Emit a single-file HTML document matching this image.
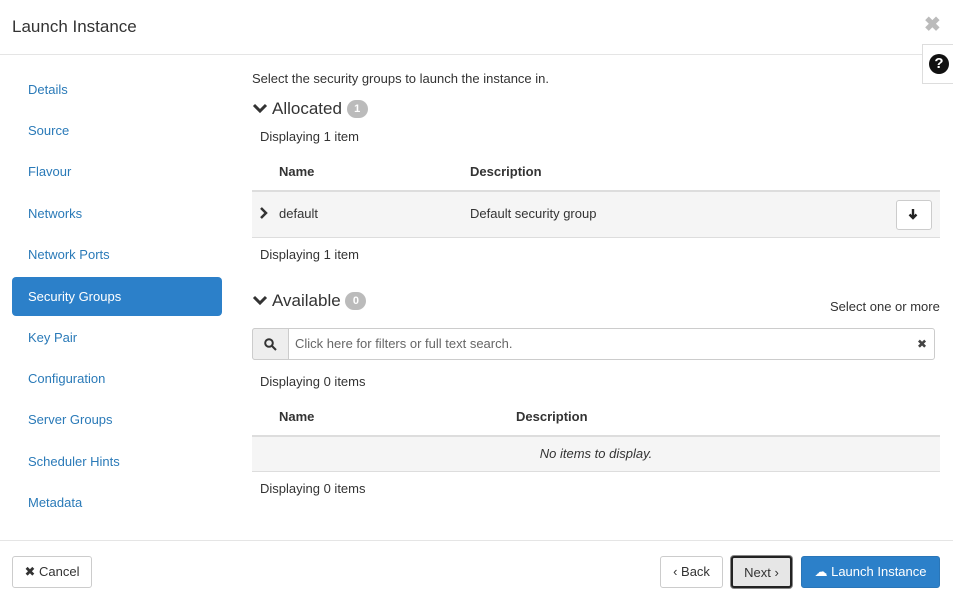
<!DOCTYPE html>
<html><head><style>
*{box-sizing:border-box;margin:0;padding:0}
body{width:953px;height:603px;background:#fff;font-family:"Liberation Sans",sans-serif;font-size:13px;color:#333;position:relative;overflow:hidden}
.a{position:absolute}
.hdr{left:0;top:0;width:953px;height:55px;border-bottom:1px solid #e5e5e5}
.nav a{position:absolute;left:12px;width:210px;height:39px;line-height:39px;padding-left:16px;color:#2a7ab8;text-decoration:none;border-radius:4px}
.nav a.act{background:#2c80c9;color:#fff}
.th{font-weight:bold}
.btn{position:absolute;border:1px solid #ccc;border-radius:3px;background:#fff;height:32px;line-height:30px;text-align:center;font-size:13px;color:#333}
.badge{display:inline-block;background:#bbb;color:#fff;border-radius:10px;font-size:11px;font-weight:bold;width:21px;height:18px;line-height:18px;text-align:center;vertical-align:2px}
</style></head><body>
<div class="a hdr"></div>
<div class="a" style="left:12px;top:17px;font-size:17px;color:#333">Launch Instance</div>
<div class="a" style="left:924px;top:12px;font-size:20px;color:#bbb;font-weight:bold">✖</div>
<div class="a" style="left:922px;top:44px;width:31px;height:40px;border:1px solid #ddd;border-right:none;background:#fff"></div>
<div class="a" style="left:929px;top:54px;width:20px;height:20px;border-radius:50%;background:#111;color:#fff;font-weight:bold;font-size:15px;line-height:20px;text-align:center">?</div>
<div class="nav">
<a style="top:70px">Details</a><a style="top:111px">Source</a><a style="top:152px">Flavour</a><a style="top:194px">Networks</a><a style="top:235px">Network Ports</a><a class="act" style="top:277px">Security Groups</a><a style="top:318px">Key Pair</a><a style="top:359px">Configuration</a><a style="top:400px">Server Groups</a><a style="top:442px">Scheduler Hints</a><a style="top:483px">Metadata</a>
</div>
<div class="a" style="left:252px;top:71px">Select the security groups to launch the instance in.</div>
<svg class="a" style="left:252px;top:102px" width="16" height="12"><path d="M2 3l6 6 6-6" stroke="#333" stroke-width="3" fill="none"/></svg>
<div class="a" style="left:272px;top:99px;font-size:17px">Allocated <span class="badge">1</span></div>
<div class="a" style="left:260px;top:129px">Displaying 1 item</div>
<div class="a th" style="left:279px;top:164px">Name</div>
<div class="a th" style="left:470px;top:164px">Description</div>
<div class="a" style="left:252px;top:190px;width:688px;height:48px;background:#f5f5f5;border-top:2px solid #ddd;border-bottom:1px solid #ddd"></div>
<svg class="a" style="left:259px;top:207px" width="10" height="12"><path d="M2 1l5 5-5 5" stroke="#333" stroke-width="2.5" fill="none"/></svg>
<div class="a" style="left:279px;top:206px">default</div>
<div class="a" style="left:470px;top:206px">Default security group</div>
<div class="btn" style="left:896px;top:200px;width:36px;height:30px"></div>
<svg class="a" style="left:908px;top:208px" width="10" height="12"><path d="M5 1v9M1.5 6.5L5 10l3.5-3.5" stroke="#222" stroke-width="2.4" fill="none"/></svg>
<div class="a" style="left:260px;top:247px">Displaying 1 item</div>
<svg class="a" style="left:252px;top:294px" width="16" height="12"><path d="M2 3l6 6 6-6" stroke="#333" stroke-width="3" fill="none"/></svg>
<div class="a" style="left:272px;top:291px;font-size:17px">Available <span class="badge">0</span></div>
<div class="a" style="left:830px;top:299px">Select one or more</div>
<div class="a" style="left:252px;top:328px;width:683px;height:32px;border:1px solid #ccc;border-radius:3px"></div>
<div class="a" style="left:252px;top:328px;width:37px;height:32px;border:1px solid #ccc;background:#eee;border-radius:3px 0 0 3px"></div>
<svg class="a" style="left:264px;top:338px" width="13" height="13"><circle cx="5" cy="5" r="3.8" stroke="#333" stroke-width="2" fill="none"/><path d="M8 8l4 4" stroke="#333" stroke-width="2"/></svg>
<div class="a" style="left:295px;top:336px;color:#666">Click here for filters or full text search.</div>
<div class="a" style="left:917px;top:337px;font-size:12px;color:#444">✖</div>
<div class="a" style="left:260px;top:374px">Displaying 0 items</div>
<div class="a th" style="left:279px;top:409px">Name</div>
<div class="a th" style="left:516px;top:409px">Description</div>
<div class="a" style="left:252px;top:435px;width:688px;height:37px;background:#f5f5f5;border-top:2px solid #ddd;border-bottom:1px solid #ddd"></div>
<div class="a" style="left:252px;top:446px;width:688px;text-align:center;font-style:italic">No items to display.</div>
<div class="a" style="left:260px;top:481px">Displaying 0 items</div>
<div class="a" style="left:0;top:540px;width:953px;border-top:1px solid #e5e5e5"></div>
<div class="btn" style="left:12px;top:556px;width:80px">✖ Cancel</div>
<div class="btn" style="left:660px;top:556px;width:63px">‹ Back</div>
<div class="btn" style="left:731px;top:556px;width:61px;background:#e6e6e6;border:2px solid #222;box-shadow:0 0 0 1px #888">Next ›</div>
<div class="btn" style="left:801px;top:556px;width:139px;background:#2c80c9;border-color:#2a76b8;color:#fff">☁ Launch Instance</div>
</body></html>
